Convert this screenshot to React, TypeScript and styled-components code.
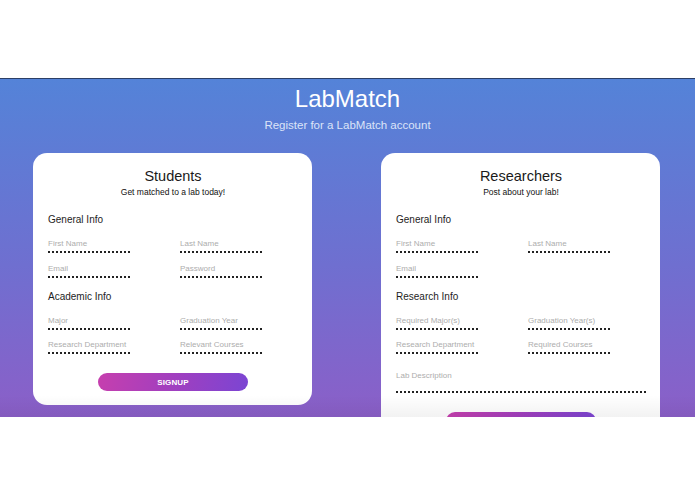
import styled, { createGlobalStyle } from "styled-components";

const GlobalStyle = createGlobalStyle`
  html, body {
    margin: 0;
    padding: 0;
    background: #ffffff;
    font-family: "Liberation Sans", Arial, sans-serif;
  }
  * { box-sizing: border-box; }
`;

type Field = { label: string; wide?: boolean };
type Group = { title: string; fields: Field[] };

const students: Group[] = [
  {
    title: "General Info",
    fields: [
      { label: "First Name" },
      { label: "Last Name" },
      { label: "Email" },
      { label: "Password" },
    ],
  },
  {
    title: "Academic Info",
    fields: [
      { label: "Major" },
      { label: "Graduation Year" },
      { label: "Research Department" },
      { label: "Relevant Courses" },
    ],
  },
];

const researchers: Group[] = [
  {
    title: "General Info",
    fields: [{ label: "First Name" }, { label: "Last Name" }, { label: "Email" }],
  },
  {
    title: "Research Info",
    fields: [
      { label: "Required Major(s)" },
      { label: "Graduation Year(s)" },
      { label: "Research Department" },
      { label: "Required Courses" },
      { label: "Lab Description", wide: true },
    ],
  },
];

function SignupCard({
  title,
  tagline,
  groups,
}: {
  title: string;
  tagline: string;
  groups: Group[];
}) {
  return (
    <Card>
      <CardTitle>{title}</CardTitle>
      <Tagline>{tagline}</Tagline>
      {groups.map((g, i) => (
        <Section key={g.title} $first={i === 0}>
          <SectionTitle>{g.title}</SectionTitle>
          <FieldGrid>
            {g.fields.map((f) => (
              <Input key={f.label} $wide={f.wide}>
                {f.label}
              </Input>
            ))}
          </FieldGrid>
        </Section>
      ))}
      <ButtonRow>
        <SignupButton>SIGNUP</SignupButton>
      </ButtonRow>
    </Card>
  );
}

export default function App() {
  return (
    <>
      <GlobalStyle />
      <TopBar />
      <Hero>
        <Brand>LabMatch</Brand>
        <Subtitle>Register for a LabMatch account</Subtitle>
        <Cards>
          <SignupCard
            title="Students"
            tagline="Get matched to a lab today!"
            groups={students}
          />
          <SignupCard
            title="Researchers"
            tagline="Post about your lab!"
            groups={researchers}
          />
        </Cards>
      </Hero>
    </>
  );
}

const TopBar = styled.div`
  height: 79px;
  background: #ffffff;
  border-bottom: 1px solid #2c3f66;
`;

const Hero = styled.section`
  position: relative;
  height: 338px;
  overflow: hidden;
  background: linear-gradient(180deg, #5483d8 0%, #6f6fd0 55%, #8b5fc8 100%);
  display: flex;
  flex-direction: column;
  align-items: center;

  /* soft shade along the bottom edge */
  &::after {
    content: "";
    position: absolute;
    left: 0;
    right: 0;
    bottom: 0;
    height: 22px;
    background: linear-gradient(180deg, rgba(0, 0, 0, 0), rgba(0, 0, 0, 0.05));
    pointer-events: none;
  }
`;

const Brand = styled.h1`
  margin: 6px 0 0;
  font-size: 24px;
  font-weight: 500;
  line-height: 28px;
  color: #ffffff;
`;

const Subtitle = styled.p`
  margin: 5px 0 0;
  font-size: 11.5px;
  line-height: 14px;
  color: #dce4f8;
`;

const Cards = styled.div`
  margin-top: 21px;
  padding-right: 2px;
  display: flex;
  align-items: flex-start;
  justify-content: center;
  gap: 69px;
`;

const Card = styled.div`
  width: 279px;
  background: #ffffff;
  border-radius: 14px;
  padding: 15px 14px 14px 15px;
  display: flex;
  flex-direction: column;
`;

const CardTitle = styled.h2`
  margin: 0;
  text-align: center;
  font-size: 14.5px;
  font-weight: 500;
  line-height: 17px;
  color: #1a1a1a;
`;

const Tagline = styled.p`
  margin: 2px 0 0;
  text-align: center;
  font-size: 8.5px;
  font-weight: 400;
  line-height: 11px;
  color: #111;
`;

const Section = styled.div<{ $first?: boolean }>`
  margin-top: ${(p) => (p.$first ? "16px" : "13px")};
`;

const SectionTitle = styled.h3`
  margin: 0;
  font-size: 10px;
  font-weight: 500;
  line-height: 12px;
  color: #1d1d1d;
`;

const FieldGrid = styled.div`
  margin-top: 13px;
  display: grid;
  grid-template-columns: 82px 82px;
  column-gap: 50px;
  row-gap: 10.5px;
`;

const Input = styled.div<{ $wide?: boolean }>`
  grid-column: ${(p) => (p.$wide ? "1 / -1" : "auto")};
  width: ${(p) => (p.$wide ? "250px" : "82px")};
  height: ${(p) => (p.$wide ? "21.5px" : "14px")};
  margin-top: ${(p) => (p.$wide ? "6.5px" : "0")};
  font-size: 8px;
  line-height: 9px;
  color: #adadad;
  white-space: nowrap;
  border-bottom: 2px dotted #222;
`;

const ButtonRow = styled.div`
  margin-top: 19px;
  display: flex;
  justify-content: center;
`;

const SignupButton = styled.button`
  width: 150px;
  height: 18px;
  border: none;
  border-radius: 9px;
  background: linear-gradient(100deg, #c63fae 0%, #a13fbf 50%, #7b45d3 100%);
  color: #ffffff;
  font-family: inherit;
  font-size: 8px;
  font-weight: 700;
  letter-spacing: 0.1px;
  padding: 0;
`;
